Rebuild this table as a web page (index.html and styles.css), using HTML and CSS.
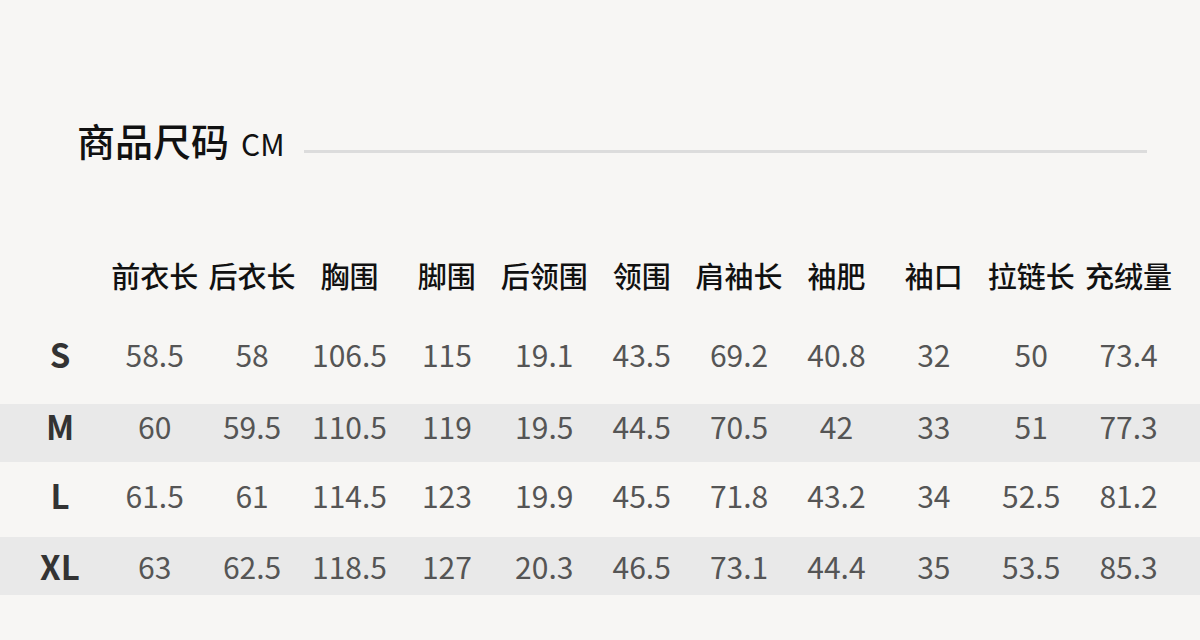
FILE: index.html
```html
<!DOCTYPE html>
<html lang="zh-CN">
<head>
<meta charset="utf-8">
<title>商品尺码</title>
<link rel="stylesheet" href="styles.css">
</head>
<body>
<div class="page">
  <div class="title-row">
    <h1 class="title">商品尺码</h1>
    <span class="unit">CM</span>
    <span class="rule"></span>
  </div>
  <div class="table">
    <div class="row head">
      <div class="label"></div>
      <div>前衣长</div><div>后衣长</div><div>胸围</div><div>脚围</div><div>后领围</div><div>领围</div><div>肩袖长</div><div>袖肥</div><div>袖口</div><div>拉链长</div><div>充绒量</div>
    </div>
    <div class="row row-s">
      <div class="label">S</div>
      <div>58.5</div><div>58</div><div>106.5</div><div>115</div><div>19.1</div><div>43.5</div><div>69.2</div><div>40.8</div><div>32</div><div>50</div><div>73.4</div>
    </div>
    <div class="row stripe row-m">
      <div class="label">M</div>
      <div>60</div><div>59.5</div><div>110.5</div><div>119</div><div>19.5</div><div>44.5</div><div>70.5</div><div>42</div><div>33</div><div>51</div><div>77.3</div>
    </div>
    <div class="row row-l">
      <div class="label">L</div>
      <div>61.5</div><div>61</div><div>114.5</div><div>123</div><div>19.9</div><div>45.5</div><div>71.8</div><div>43.2</div><div>34</div><div>52.5</div><div>81.2</div>
    </div>
    <div class="row stripe row-xl">
      <div class="label">XL</div>
      <div>63</div><div>62.5</div><div>118.5</div><div>127</div><div>20.3</div><div>46.5</div><div>73.1</div><div>44.4</div><div>35</div><div>53.5</div><div>85.3</div>
    </div>
  </div>
</div>
</body>
</html>
```

FILE: styles.css
```css
html, body {
  margin: 0;
  padding: 0;
  background: #f7f6f4;
}
body {
  font-family: "Noto Sans CJK SC", "Noto Sans", sans-serif;
  width: 1200px;
  height: 640px;
  overflow: hidden;
}
.page {
  padding-top: 121px;
}
.title-row {
  display: flex;
  align-items: flex-end;
  margin-left: 77px;
  margin-right: 53px;
  height: 38px;
}
.title {
  margin: 0;
  font-size: 38px;
  line-height: 38px;
  font-weight: 500;
  color: #111;
  white-space: nowrap;
}
.unit {
  font-size: 30px;
  line-height: 30px;
  color: #111;
  margin-left: 12px;
  margin-bottom: 1px;
}
.rule {
  flex: 1;
  height: 3px;
  background: #dcdcdc;
  margin-left: 19px;
  margin-bottom: 6px;
}
.table {
  margin-top: 94px;
  display: flex;
  flex-direction: column;
}
.row {
  display: grid;
  grid-template-columns: 106px repeat(11, 97.4px);
  align-items: center;
  text-align: center;
  font-size: 30px;
  line-height: 44px;
  color: #555;
  white-space: nowrap;
}
.row.head {
  font-size: 29px;
  font-weight: 500;
  color: #111;
  margin-bottom: 35px;
}
.row.stripe {
  background: #e9e9e9;
}
.row-s {
  padding-bottom: 28px;
}
.row-m {
  padding-bottom: 14px;
}
.row-l {
  padding-top: 11px;
  padding-bottom: 20px;
}
.row-xl {
  padding-top: 7px;
  padding-bottom: 7px;
}
.label {
  padding-left: 14px;
  font-size: 33px;
  font-weight: 700;
  color: #333;
}
```
